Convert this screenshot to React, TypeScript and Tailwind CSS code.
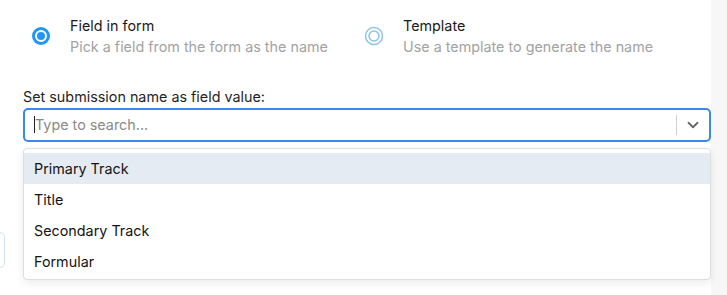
import { ChevronDown } from 'lucide-react';

const fields = ['Primary Track', 'Title', 'Secondary Track', 'Formular'];

const RadioOn = () => (
  <svg width="20" height="20" viewBox="0 0 20 20" className="shrink-0">
    <circle cx="10" cy="10" r="9" fill="#2196f3" />
    <circle cx="10" cy="10" r="5" fill="none" stroke="#fff" strokeWidth="2" />
  </svg>
);

const RadioOff = () => (
  <svg width="20" height="20" viewBox="0 0 20 20" className="shrink-0">
    <circle cx="10" cy="10" r="8.5" fill="none" stroke="#8cc4e4" strokeWidth="1.5" />
    <circle cx="10" cy="10" r="5" fill="none" stroke="#8cc4e4" strokeWidth="1.5" />
  </svg>
);

type OptionProps = { title: string; hint: string; checked?: boolean; className?: string };

const NameOption = ({ title, hint, checked, className }: OptionProps) => (
  <div className={`flex items-center gap-[19px] ${className ?? ''}`}>
    {checked ? <RadioOn /> : <RadioOff />}
    <div className="leading-[21px]">
      <div className="text-[14.35px] text-[#1a1a1a]">{title}</div>
      <div className="text-[14.35px] text-[#a3a3a3]">{hint}</div>
    </div>
  </div>
);

export default function App() {
  return (
    <div
      className="flex h-[295px] w-full bg-[#f7f7f7] overflow-hidden"
      style={{ fontFamily: 'Inter, "Noto Sans", sans-serif' }}
    >
      <div className="relative w-[711px] shrink-0 bg-white pl-[23px]">
        {/* edge of a control hidden behind the menu */}
        <div className="absolute left-[-6px] top-[232px] h-[36px] w-[11px] rounded-[5px] border border-[#d6e4f2]" />

        <div className="flex pl-[8px] pt-[15px]">
          <NameOption checked title="Field in form" hint="Pick a field from the form as the name" className="w-[333px]" />
          <NameOption title="Template" hint="Use a template to generate the name" />
        </div>

        <div className="mt-[30px] text-[14.35px] leading-[20px] text-[#1f1f1f]">Set submission name as field value:</div>

        <div className="mt-[1px] flex h-[34px] items-center rounded-[5px] border-2 border-[#3b87f0] pl-[9px] pr-[7px]">
          <div className="flex flex-1 items-center">
            <span className="h-[17px] w-px bg-[#222]" />
            <span className="text-[14.35px] text-[#8a8a8a]">Type to search...</span>
          </div>
          <span className="h-[20px] w-px bg-[#cfcfcf]" />
          <ChevronDown className="ml-[7px] text-[#666]" size={18} strokeWidth={2.4} />
        </div>

        <div className="mt-[6px] rounded-[4px] border border-[#dedede] bg-white pt-[4px] pb-[2px] shadow-[0_3px_8px_rgba(0,0,0,0.08)]">
          {fields.map((f, i) => (
            <div
              key={f}
              className={`flex h-[31px] items-center px-[10px] text-[14.35px] text-[#141414] ${i === 0 ? 'bg-[#e4ebf2]' : ''}`}
            >
              {f}
            </div>
          ))}
        </div>
      </div>
      <div className="flex-1" />
    </div>
  );
}
